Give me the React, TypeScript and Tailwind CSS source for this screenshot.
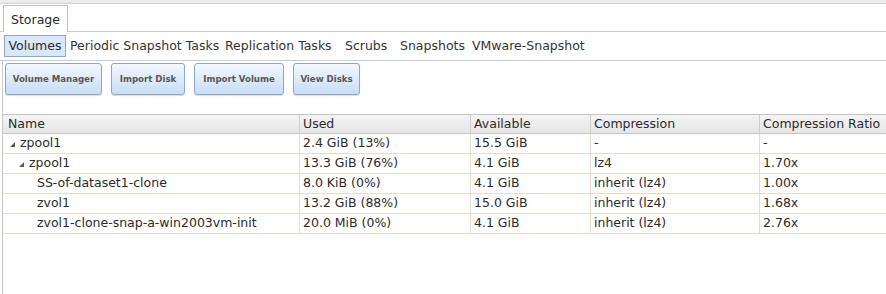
import React from "react";

const subTabs = [
  { label: "Volumes", w: "w-[62px]", active: true },
  { label: "Periodic Snapshot Tasks", w: "w-[155px]" },
  { label: "Replication Tasks", w: "w-[120px]" },
  { label: "Scrubs", w: "w-[55px]" },
  { label: "Snapshots", w: "w-[72px]" },
  { label: "VMware-Snapshot", w: "w-[120px]" },
];

const buttons = [
  { label: "Volume Manager", w: "w-[97px]" },
  { label: "Import Disk", w: "w-[74px]" },
  { label: "Import Volume", w: "w-[90px]" },
  { label: "View Disks", w: "w-[67px]" },
];

type Row = { name: string; level: number; open?: boolean; used: string; avail: string; comp: string; ratio: string };

const rows: Row[] = [
  { name: "zpool1", level: 0, open: true, used: "2.4 GiB (13%)", avail: "15.5 GiB", comp: "-", ratio: "-" },
  { name: "zpool1", level: 1, open: true, used: "13.3 GiB (76%)", avail: "4.1 GiB", comp: "lz4", ratio: "1.70x" },
  { name: "SS-of-dataset1-clone", level: 2, used: "8.0 KiB (0%)", avail: "4.1 GiB", comp: "inherit (lz4)", ratio: "1.00x" },
  { name: "zvol1", level: 2, used: "13.2 GiB (88%)", avail: "15.0 GiB", comp: "inherit (lz4)", ratio: "1.68x" },
  { name: "zvol1-clone-snap-a-win2003vm-init", level: 2, used: "20.0 MiB (0%)", avail: "4.1 GiB", comp: "inherit (lz4)", ratio: "2.76x" },
];

const cols = [
  { label: "Name", w: "w-[296px]" },
  { label: "Used", w: "w-[171px]" },
  { label: "Available", w: "w-[120px]" },
  { label: "Compression", w: "w-[169px]" },
  { label: "Compression Ratio", w: "w-[130px]" },
];

function Expando() {
  return (
    <svg width="5" height="5" viewBox="0 0 5 5" className="shrink-0 mt-[2px]">
      <polygon points="5,0 5,5 0,5" fill="#5a5a5a" />
    </svg>
  );
}

export default function App() {
  return (
    <div className="w-[886px] h-[294px] overflow-hidden bg-white text-[12.5px] text-[#2b2b2b] font-['DejaVu_Sans',Verdana,sans-serif]">
      <div className="h-[4px] bg-[#ececec] border-b border-[#d2d2d2]" />
      {/* top tab strip */}
      <div className="flex h-[28px] pt-[1px]">
        <div className="w-[3px] border-b border-[#c4cbd6]" />
        <div className="w-[65px] border border-b-0 border-[#b8c2d2] bg-white flex items-center justify-center pt-[2px]">
          Storage
        </div>
        <div className="flex-1 border-b border-[#c4cbd6]" />
      </div>
      {/* sub tabs */}
      <div className="flex items-center h-[29px] pl-[4px] border-b border-[#c4cbd6]">
        {subTabs.map((t) =>
          t.active ? (
            <div key={t.label} className={`${t.w} h-[22px] flex items-center justify-center border border-[#8fa7c7] bg-[#d9e7f8]`}>
              {t.label}
            </div>
          ) : (
            <div key={t.label} className={`${t.w} pl-[4px] whitespace-nowrap text-[#333]`}>
              {t.label}
            </div>
          )
        )}
      </div>
      {/* content */}
      <div className="ml-[2px] border-l border-[#c8c8c8] h-full">
        <div className="flex gap-[9px] pl-[2px] pt-[2px]">
          {buttons.map((b) => (
            <div
              key={b.label}
              className={`${b.w} h-[32px] flex items-center justify-center rounded-[3px] border border-[#8ba7cb] bg-gradient-to-b from-[#f3f8fe] to-[#c9ddf5] shadow-[0_1px_1px_rgba(0,0,0,0.15)] text-[8.6px] font-bold text-[#585858] whitespace-nowrap pt-[1px]`}
            >
              {b.label}
            </div>
          ))}
        </div>
        <div className="mt-[19px] w-[900px]">
          <div className="flex h-[20px] border-t border-b border-[#c6c6c6] bg-gradient-to-b from-[#f4f4f4] to-[#e6e6e6]">
            {cols.map((c, i) => (
              <div key={c.label} className={`${c.w} shrink-0 flex items-center ${i === 0 ? "pl-[5px]" : "pl-[3px] border-l border-[#cfcfcf]"}`}>
                {c.label}
              </div>
            ))}
          </div>
          {rows.map((r, ri) => (
            <div key={ri} className="flex h-[20px] border-b border-[#eadccd]">
              <div className={`${cols[0].w} shrink-0 flex items-center whitespace-nowrap`}>
                <div className={r.level === 0 ? "w-[7px]" : r.level === 1 ? "w-[16px]" : "w-[34px]"} />
                {r.open && <Expando />}
                {r.open && <div className="w-[5px]" />}
                {r.name}
              </div>
              {[r.used, r.avail, r.comp, r.ratio].map((v, i) => (
                <div key={i} className={`${cols[i + 1].w} shrink-0 flex items-center pl-[3px] border-l border-[#eadccd] whitespace-nowrap`}>
                  {v}
                </div>
              ))}
            </div>
          ))}
        </div>
      </div>
    </div>
  );
}
